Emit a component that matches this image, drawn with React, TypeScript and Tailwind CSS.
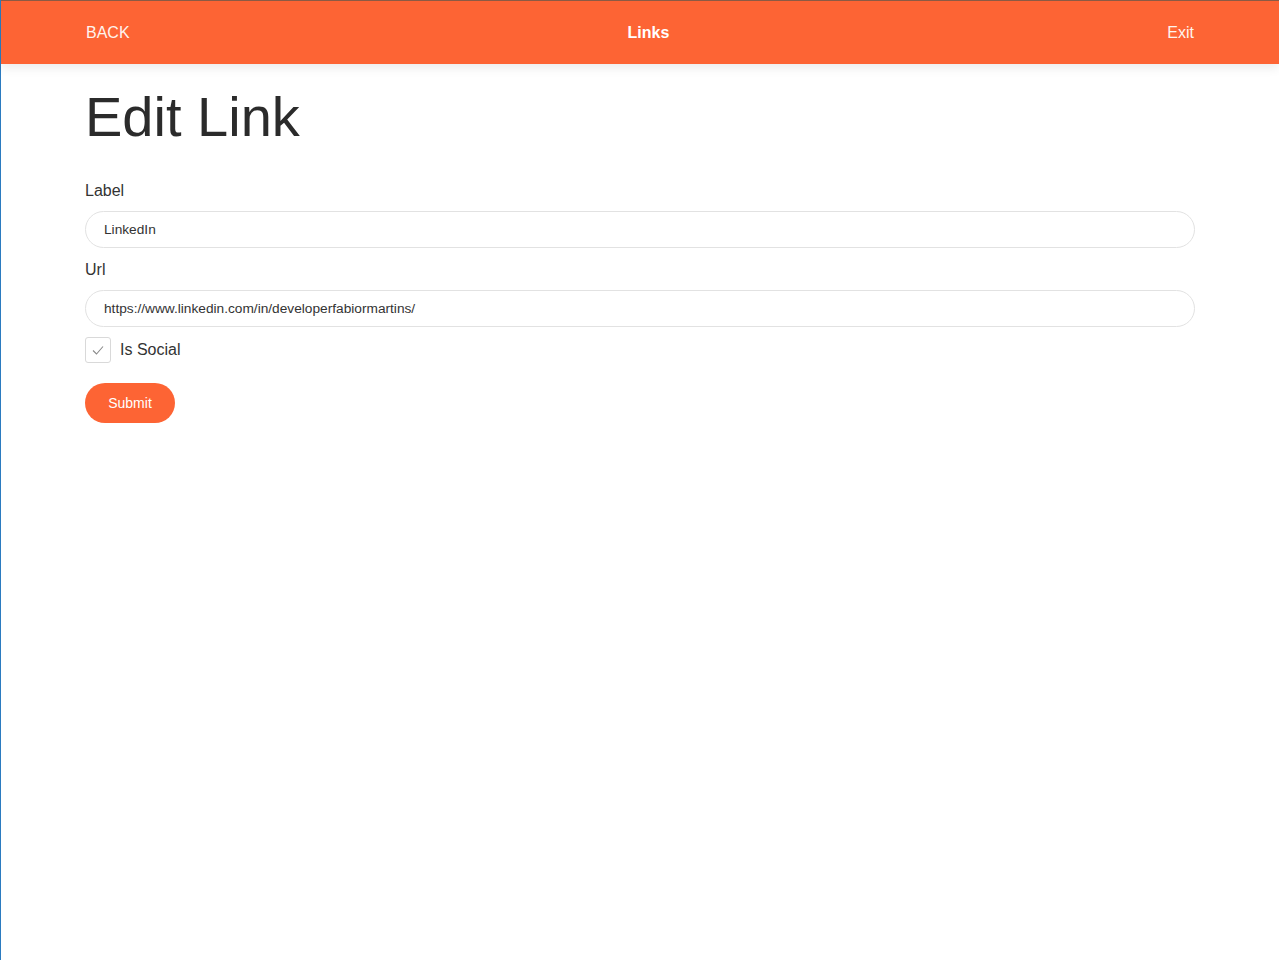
import React, { useState } from 'react';

const App = () => {
  const [label, setLabel] = useState('LinkedIn');
  const [url, setUrl] = useState('https://www.linkedin.com/in/developerfabiormartins/');
  const [isSocial, setIsSocial] = useState(true);

  return (
    <div
      className="min-h-[960px] bg-white border-l border-[#2b7bc0] text-[#333333]"
      style={{ fontFamily: '"Liberation Sans", Arial, sans-serif' }}
    >
      {/* --- Header --- */}
      <header className="h-16 bg-[#fd6434] border-t border-[#8c5a44] shadow-[0_4px_10px_rgba(0,0,0,0.08)]">
        <div className="w-[1110px] mx-auto h-full flex items-center justify-between text-[#fff4ee]">
          <a className="text-base pl-px">BACK</a>
          <span className="text-base font-bold text-white">Links</span>
          <a className="text-base pr-px">Exit</a>
        </div>
      </header>

      {/* --- Form --- */}
      <main className="w-[1110px] mx-auto pt-[19px]">
        <h1 className="text-[56px] leading-[1.2] text-[#2b2b2b] mb-[29px]">Edit Link</h1>

        <form onSubmit={(e) => e.preventDefault()}>
          <div className="mb-[10px]">
            <label className="block text-base mb-[8px] leading-6">Label</label>
            <input
              value={label}
              onChange={(e) => setLabel(e.target.value)}
              className="w-full h-[37px] px-[18px] text-[13.7px] text-[#333] rounded-full border border-[#e2e2e2] outline-none"
            />
          </div>
          <div className="mb-[10px]">
            <label className="block text-base mb-[8px] leading-6">Url</label>
            <input
              value={url}
              onChange={(e) => setUrl(e.target.value)}
              className="w-full h-[37px] px-[18px] text-[13.7px] text-[#333] rounded-full border border-[#e2e2e2] outline-none"
            />
          </div>
          <label className="flex items-center gap-[9px] cursor-pointer">
            <button
              type="button"
              onClick={() => setIsSocial(!isSocial)}
              className="w-[26px] h-[26px] border border-[#d9d9d9] rounded-[3px] flex items-center justify-center bg-white"
            >
              {isSocial && (
                <svg width="14" height="14" viewBox="0 0 14 14" fill="none">
                  <path d="M2 7.5 L5.5 11 L12 3.5" stroke="#8a8a8a" strokeWidth="1.1" />
                </svg>
              )}
            </button>
            <span className="text-base">Is Social</span>
          </label>

          <button
            type="submit"
            className="mt-[20px] w-[90px] h-10 rounded-full bg-[#fd6434] text-white text-sm"
          >
            Submit
          </button>
        </form>
      </main>
    </div>
  );
};

export default App;
